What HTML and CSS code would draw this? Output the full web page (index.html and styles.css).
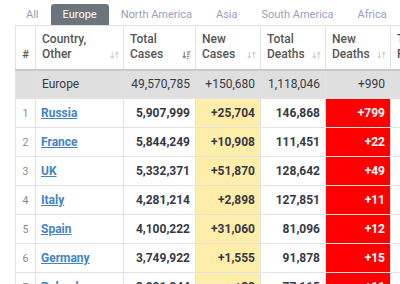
FILE: index.html
```html
<!DOCTYPE html>
<html>
<head>
<meta charset="utf-8">
<link rel="stylesheet" href="styles.css">
</head>
<body>
<div class="page">
  <ul class="tabs">
    <li class="tab">All</li>
    <li class="tab active">Europe</li>
    <li class="tab">North America</li>
    <li class="tab">Asia</li>
    <li class="tab">South America</li>
    <li class="tab">Africa</li>
  </ul>
  <table class="covid">
    <colgroup>
      <col class="c-num"><col class="c-country"><col class="c-tc"><col class="c-nc"><col class="c-td"><col class="c-nd"><col class="c-tr">
    </colgroup>
    <thead>
      <tr>
        <th class="center">#</th>
        <th><div class="hd"><span>Country,<br>Other</span><svg class="sort" viewBox="0 0 10 10"><path d="M2.5 1v7M0.8 6.3l1.7 1.9 1.7-1.9M7.5 9V2M5.8 3.7l1.7-1.9 1.7 1.9" fill="none" stroke="currentColor" stroke-width="1.2"/></svg></div></th>
        <th><div class="hd"><span>Total<br>Cases</span><svg class="sort on" viewBox="0 0 10 10"><path d="M2.5 1v7M0.8 6.3l1.7 1.9 1.7-1.9" fill="none" stroke="currentColor" stroke-width="1.3"/><path d="M5.5 1.5h4M5.5 4h3.2M5.5 6.5h2.4M5.5 9h1.6" fill="none" stroke="currentColor" stroke-width="1.2"/></svg></div></th>
        <th><div class="hd"><span>New<br>Cases</span><svg class="sort" viewBox="0 0 10 10"><path d="M2.5 1v7M0.8 6.3l1.7 1.9 1.7-1.9M7.5 9V2M5.8 3.7l1.7-1.9 1.7 1.9" fill="none" stroke="currentColor" stroke-width="1.2"/></svg></div></th>
        <th><div class="hd"><span>Total<br>Deaths</span><svg class="sort" viewBox="0 0 10 10"><path d="M2.5 1v7M0.8 6.3l1.7 1.9 1.7-1.9M7.5 9V2M5.8 3.7l1.7-1.9 1.7 1.9" fill="none" stroke="currentColor" stroke-width="1.2"/></svg></div></th>
        <th><div class="hd"><span>New<br>Deaths</span><svg class="sort" viewBox="0 0 10 10"><path d="M2.5 1v7M0.8 6.3l1.7 1.9 1.7-1.9M7.5 9V2M5.8 3.7l1.7-1.9 1.7 1.9" fill="none" stroke="currentColor" stroke-width="1.2"/></svg></div></th>
        <th><div class="hd"><span>Total<br>Recovered</span></div></th>
      </tr>
    </thead>
    <tbody>
      <tr class="total">
        <td></td><td>Europe</td><td class="r">49,570,785</td><td class="r">+150,680</td><td class="r">1,118,046</td><td class="r">+990</td><td></td>
      </tr>
      <tr>
        <td class="idx">1</td><td><a href="#">Russia</a></td><td class="r">5,907,999</td><td class="r nc">+25,704</td><td class="r">146,868</td><td class="r nd">+799</td><td></td>
      </tr>
      <tr>
        <td class="idx">2</td><td><a href="#">France</a></td><td class="r">5,844,249</td><td class="r nc">+10,908</td><td class="r">111,451</td><td class="r nd">+22</td><td></td>
      </tr>
      <tr>
        <td class="idx">3</td><td><a href="#">UK</a></td><td class="r">5,332,371</td><td class="r nc">+51,870</td><td class="r">128,642</td><td class="r nd">+49</td><td></td>
      </tr>
      <tr>
        <td class="idx">4</td><td><a href="#">Italy</a></td><td class="r">4,281,214</td><td class="r nc">+2,898</td><td class="r">127,851</td><td class="r nd">+11</td><td></td>
      </tr>
      <tr>
        <td class="idx">5</td><td><a href="#">Spain</a></td><td class="r">4,100,222</td><td class="r nc">+31,060</td><td class="r">81,096</td><td class="r nd">+12</td><td></td>
      </tr>
      <tr>
        <td class="idx">6</td><td><a href="#">Germany</a></td><td class="r">3,749,922</td><td class="r nc">+1,555</td><td class="r">91,878</td><td class="r nd">+15</td><td></td>
      </tr>
      <tr>
        <td class="idx">7</td><td><a href="#">Poland</a></td><td class="r">3,001,044</td><td class="r nc">+38</td><td class="r">77,115</td><td class="r nd">+11</td><td></td>
      </tr>
    </tbody>
  </table>
</div>
</body>
</html>
```

FILE: styles.css
```css
* { box-sizing: border-box; }
html, body { margin: 0; padding: 0; background: #fff; }
body { font-family: Roboto, "Liberation Sans", sans-serif; }
.page { width: 400px; height: 284px; overflow: hidden; }

.tabs {
  list-style: none;
  margin: 0;
  padding: 0 0 0 14px;
  display: flex;
  align-items: flex-end;
  height: 25px;
}
.tab {
  height: 21px;
  padding: 0 12px;
  font-size: 11px;
  line-height: 21px;
  color: #9b9dc0;
  white-space: nowrap;
  border-radius: 3px 3px 0 0;
}
.tab.active {
  background: #6c757d;
  color: #fff;
}

.covid {
  margin-left: 15px;
  border-collapse: collapse;
  table-layout: fixed;
  width: 455px;
  font-size: 12px;
  color: #363945;
}
.c-num { width: 20px; }
.c-country { width: 88px; }
.c-tc { width: 72px; }
.c-nc { width: 65px; }
.c-td { width: 65px; }
.c-nd { width: 65px; }
.c-tr { width: 80px; }

.covid th, .covid td {
  border: 1px solid #e2e2e2;
  padding: 0 5px;
  white-space: nowrap;
}
.covid th {
  height: 44px;
  text-align: left;
  vertical-align: bottom;
  font-weight: 500;
  color: #555;
  line-height: 15px;
  padding: 0 4px 7px 6px;
  border-bottom: 2px solid #c8c8c8;
}
.covid th.center { text-align: center; padding: 0 0 7px; font-size: 11px; }
.hd {
  display: flex;
  align-items: flex-end;
  justify-content: space-between;
}
.sort {
  width: 9px;
  height: 10px;
  color: #d0d0d0;
  margin-bottom: 2px;
  flex: none;
}
.sort.on { color: #8a8a8a; }

.covid td { height: 29px; font-weight: 700; }
.covid td.r { text-align: right; }
.covid tr.total td { background: #dfdfdf; font-weight: 400; height: 29px; padding-left: 6px; }
.covid tr.total td.r { padding-left: 5px; }
.covid td.idx { text-align: center; color: #888; font-weight: 400; font-size: 10.5px; padding: 0; }
.covid td a { color: #4384c4; text-decoration: underline; font-weight: 700; }
.covid td.nc { background: #ffeeaa; }
.covid td.nd { background: #ff0000; color: #fff; }
```
